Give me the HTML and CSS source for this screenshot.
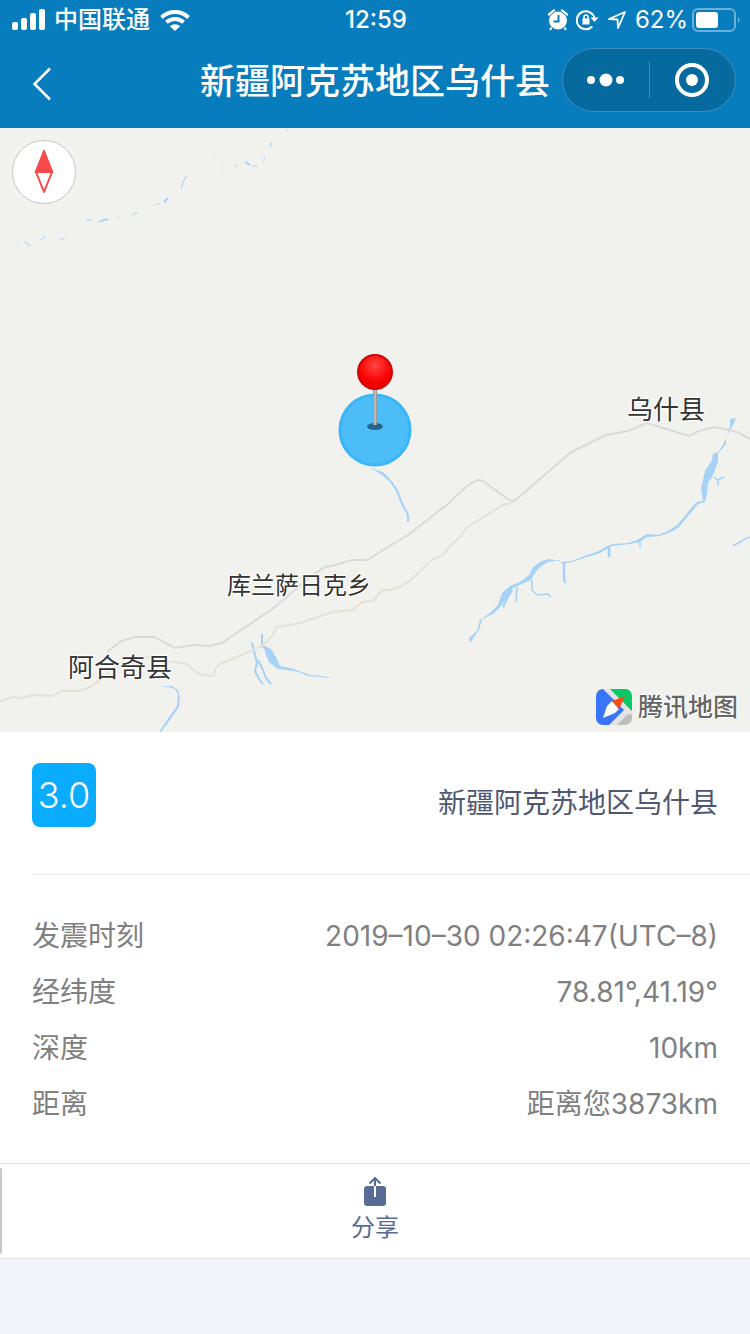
FILE: index.html
```html
<!DOCTYPE html>
<html lang="zh-CN">
<head>
    <meta charset="UTF-8">
    <meta name="viewport" content="width=device-width, initial-scale=1.0">
    <title>新疆阿克苏地区乌什县</title>
    <link rel="stylesheet" href="styles.css">
</head>
<body>
    <header class="header">
        <div class="status">
            <div class="status-left">
                <svg class="signal" width="34" height="22" viewBox="0 0 34 22" fill="#fff">
                    <rect x="0" y="13" width="6" height="8" rx="2"/>
                    <rect x="9" y="9" width="6" height="12" rx="2"/>
                    <rect x="18" y="4" width="6" height="17" rx="2"/>
                    <rect x="27" y="0" width="6" height="21" rx="2"/>
                </svg>
                <span>中国联通</span>
                <svg class="wifi" width="30" height="22" viewBox="0 0 30 22">
                    <path d="M1.5 8.5a19.5 19.5 0 0 1 27 0M6.4 13.3a12.6 12.6 0 0 1 17.2 0" fill="none" stroke="#fff" stroke-width="4"/>
                    <path d="M9.8 17.2a7.8 7.8 0 0 1 10.4 0L15 22z" fill="#fff"/>
                </svg>
            </div>
            <span class="time">12:59</span>
            <div class="status-right">
                <svg width="20" height="22" viewBox="0 0 20 22">
                    <circle cx="10" cy="11.5" r="9" fill="#fff"/>
                    <path d="M1.5 5.5L6 1.8M18.5 5.5L14 1.8" stroke="#fff" stroke-width="3" stroke-linecap="round"/>
                    <path d="M3.5 18.5L2 21M16.5 18.5L18 21" stroke="#fff" stroke-width="2"/>
                    <path d="M10.5 6v6.5H5.5" fill="none" stroke="#087dbd" stroke-width="2"/>
                    <path d="M1 7.5L8 1.5M19 7.5L12 1.5" stroke="#087dbd" stroke-width="1"/>
                </svg>
                <svg width="23" height="22" viewBox="0 0 23 22">
                    <path d="M18.6 9.5A9 9 0 1 0 16.3 17.5" fill="none" stroke="#fff" stroke-width="2"/>
                    <path d="M14.5 8.5h8L18.5 13z" fill="#fff"/>
                    <rect x="6.5" y="9.5" width="7" height="6" fill="#fff"/>
                    <path d="M8 10V8a2 2 0 0 1 4 0v2" fill="none" stroke="#fff" stroke-width="1.5"/>
                </svg>
                <svg width="20" height="20" viewBox="0 0 20 20">
                    <path d="M2 9L18 2L11 18L10.5 9.5z" fill="none" stroke="#fff" stroke-width="1.8" stroke-linejoin="round"/>
                </svg>
                <span class="percent">62%</span>
                <svg class="battery" width="48" height="24" viewBox="0 0 48 24">
                    <rect x="1" y="1" width="42" height="22" rx="5" fill="none" stroke="#6bb1d7" stroke-width="2"/>
                    <rect x="4" y="4" width="22" height="16" rx="3" fill="#fff"/>
                    <path d="M46 8.5q3 3.5 0 7z" fill="#6bb1d7"/>
                </svg>
            </div>
        </div>
        <nav class="nav">
            <button class="back" type="button" aria-label="返回">
                <svg width="20" height="34" viewBox="0 0 20 34"><path d="M18 1.5L2.5 17L18 32.5" fill="none" stroke="#fff" stroke-width="2.5"/></svg>
            </button>
            <h1 class="title">新疆阿克苏地区乌什县</h1>
            <div class="capsule">
                <button type="button" aria-label="更多">
                    <svg width="38" height="14" viewBox="0 0 38 14" fill="#fff"><circle cx="4" cy="7" r="4"/><circle cx="19" cy="7" r="6.5"/><circle cx="33" cy="7" r="4"/></svg>
                </button>
                <button type="button" aria-label="关闭">
                    <svg width="34" height="34" viewBox="0 0 34 34"><circle cx="17" cy="17" r="15" fill="none" stroke="#fff" stroke-width="4"/><circle cx="17" cy="17" r="6" fill="#fff"/></svg>
                </button>
            </div>
        </nav>
    </header>

    <section class="map">
        <svg class="map-canvas" viewBox="0 128 750 604" preserveAspectRatio="xMidYMid slice">
            <defs>
                <radialGradient id="pinHead" cx="50%" cy="30%" r="60%">
                    <stop offset="0" stop-color="#ff4545"/>
                    <stop offset="0.7" stop-color="#fb0808"/>
                    <stop offset="1" stop-color="#f00000"/>
                </radialGradient>
            </defs>
            <!-- rivers -->
            <g fill="none" stroke="#a6d2f8" stroke-width="1">
                <path d="M18 244h1M24 242l3 1l3 4M41 240l4-4M60 239h5M82 227h1M86 220h4l2 1M98 222l5-1M117 217l2 1M132 215l3-2h3M154 205h2M157 204h3M181 189l2-6l3-7M213 158h1M223 168h1M234 167l4-3M252 166h5M263 161l2-3M270 147l2-5M286 130h3"/>
                <path d="M101 221l7-2M164 202l4-4M245 162l5 3" stroke-width="2"/>
            </g>
            <g fill="#a6d2f8">
                <path d="M369 467l7 3l7 2l8 8l7 10l5 13l6 12v7h-2v-7l-6-11l-5-13l-6-9l-8-7z"/>
                <path d="M730 419L736 418L733 425L729 432L727 436L730 426z"/>
                <path d="M726 438L726 444L723 448L718 453L718 462L714 472L712 477L708 483L707 493L705 502L698 504L693 510L689 515L683 522L679 527L673 531L660 536L647 537L640 542L630 544L612 546L600 553L587 557L572 562L562 564L559 560L555 561L548 562L540 567L535 573L531 580L522 584L513 588L507 597L500 607L493 614L482 619L479 630L470 643L469 638L477 631L480 620L490 613L498 605L502 593L510 586L520 582L529 575L533 567L540 562L548 559L555 560L561 562L572 561L587 555L599 551L607 546L613 544L628 543L637 540L647 534L658 535L668 531L677 525L685 516L692 507L697 502L703 501L701 488L703 480L705 471L712 460L713 454L718 452L723 445z"/>
            </g>
            <g fill="none" stroke="#a6d2f8" stroke-width="1.5">
                <path d="M517 587l-1 15M532 580v10l5 5l11-1l3 3M640 542v5M714 477l4 3l6-3M718 480v6M733 546l7-4l5-3l5-2"/>
                <path d="M512 590l-5 8l-4 9M564 563v15l1 5M609 546v11" stroke-width="2.5"/>
                <path d="M262 634v10l2 4M252 643l3 12l2 8l-2 8l4 8l4 5M258 660l5 10l3 8l5 6" stroke-width="2"/>
            </g>
            <path fill="#a6d2f8" d="M263 645l8 4l5 8l4 9l10 2l12 4l8 3l12 1l11 2l-13-1l-12-1l-9-4l-12-2l-9-1l-9-7l-3-7z"/>
            <path fill="#a6d2f8" d="M158 686h14l6 4l2 8l-1 9l-7 10l-11 15h-2l10-15l8-11l1-12l-3-5l-6-2z"/>
            <!-- roads -->
            <path d="M514 502l-11 3l-37 23l-6 9l-10 9l-7 9l-10 4l-8 7l-15 15l-10 6l-10 3h-8l-9 11l-10 1l-11 8l-19 2l-33 11l-23 4l-5 9l-10 10l-44 19l-3 5l-1 6l-12-1l-10-6l-5-5l-19-3l-21-4l-30 10l-17 13l-10 7l-11 4h-16l-11 5l-19-1l-11 3l-9-1l-13 4" fill="none" stroke="#e5e1d6" stroke-width="2"/>
            <path d="M750 439l-13-7l-23-5l-15 4l-10 5l-42-13l-19 8l-22 4l-35 17l-54 47l-4 2l-4-1l-26-19l-6-1l-10 6l-19 18l-40 31l-10 6l-31 19l-15 0l-17 5l-10 2l-15 10l-35 30l-53 36l-13 3l-16-1l-18 3l-21-11h-20l-14 5l-13 10" fill="none" stroke="#dadada" stroke-width="2"/>
            <!-- epicentre and pin -->
            <circle cx="375" cy="430" r="35" fill="#4dbdf7" stroke="#38b5fb" stroke-width="3"/>
            <ellipse cx="375" cy="426.500" rx="8" ry="3.500" fill="#25658a"/>
            <path d="M375 388v37" stroke="#8e8e8e" stroke-width="4"/>
            <path d="M375 388v37" stroke="#beb9b7" stroke-width="2.5"/>
            <circle cx="375" cy="372" r="17" fill="url(#pinHead)" stroke="#d10505" stroke-width="2"/>
        </svg>
        <span class="place place-wushi">乌什县</span>
        <span class="place place-kulansa">库兰萨日克乡</span>
        <span class="place place-aheqi">阿合奇县</span>
        <button class="compass" type="button" aria-label="指北针">
            <svg width="20" height="46" viewBox="0 0 20 46">
                <path d="M10 3L2 23L10 43L18 23z" fill="#fff" stroke="#f84a4a" stroke-width="2" stroke-linejoin="round"/>
                <path d="M10 1L1 23.500H19z" fill="#f84a4a" stroke="#f84a4a" stroke-linejoin="round"/>
            </svg>
        </button>
        <div class="brand">
            <svg width="36" height="36" viewBox="0 0 36 36">
                <defs><clipPath id="logoBox"><rect width="36" height="36" rx="7"/></clipPath></defs>
                <g clip-path="url(#logoBox)">
                    <rect width="36" height="36" fill="#e3e3e3"/>
                    <path d="M0 0H7L28 21L13 36H0z" fill="#3875fb"/>
                    <path d="M14 0H36V22z" fill="#06c966"/>
                    <path d="M36 25V36H21L31 26z" fill="#bebebe"/>
                </g>
                <path d="M7 29L11 17L16 12L23 20L19 24z" fill="#fff"/>
                <path d="M29 7L16 12L23 20z" fill="#fc4c13"/>
            </svg>
            <span>腾讯地图</span>
        </div>
    </section>

    <main class="info">
        <div class="summary">
            <span class="level">3.0</span>
            <span class="location">新疆阿克苏地区乌什县</span>
        </div>
        <dl class="details">
            <div class="row"><dt>发震时刻</dt><dd>2019–10–30 02:26:47(UTC–8)</dd></div>
            <div class="row"><dt>经纬度</dt><dd>78.81°,41.19°</dd></div>
            <div class="row"><dt>深度</dt><dd>10km</dd></div>
            <div class="row"><dt>距离</dt><dd>距离您3873km</dd></div>
        </dl>
        <button class="share" type="button">
            <svg width="24" height="30" viewBox="0 0 24 30">
                <rect x="1" y="9" width="22" height="20" rx="3" fill="#576b95"/>
                <path d="M12 9v11" stroke="#fff" stroke-width="2"/>
                <path d="M12 9V1M6.5 6.5L12 1L17.5 6.5" fill="none" stroke="#576b95" stroke-width="2"/>
            </svg>
            <span>分享</span>
        </button>
    </main>
</body>
</html>
```

FILE: styles.css
```css
* {
    box-sizing: border-box;
}
body {
    margin: 0;
    background-color: #f3f4f9;
    font-family: Inter, "Noto Sans CJK SC", sans-serif;
    color: #808080;
}
button {
    display: flex;
    align-items: center;
    justify-content: center;
    margin: 0;
    padding: 0;
    border: 0;
    background: none;
    font-family: inherit;
    color: inherit;
}
svg {
    display: block;
    flex: none;
}

/* header */
.header {
    background-color: #087dbd;
    color: #fff;
}
.status {
    display: grid;
    grid-template-columns: 1fr auto 1fr;
    align-items: center;
    height: 40px;
    padding: 0 10px 0 12px;
    font-size: 24px;
    line-height: 32px;
}
.status-left, .status-right {
    display: flex;
    align-items: center;
    gap: 8px;
}
.status-left {
    font-weight: 500;
}
.status-right {
    justify-content: flex-end;
}
.wifi {
    margin-left: 2px;
}
.time {
    font-weight: 500;
}
.battery {
    margin-left: -4px;
}
.nav {
    display: grid;
    grid-template-columns: 1fr auto 1fr;
    align-items: center;
    height: 88px;
}
.back {
    justify-self: start;
    height: 88px;
    padding: 0 32px;
}
.title {
    margin: 0 0 6px;
    font-size: 35px;
    line-height: 48px;
    font-weight: 500;
}
.capsule {
    display: flex;
    justify-self: end;
    align-items: center;
    width: 174px;
    height: 64px;
    margin: 0 14px 8px 0;
    border: 1px solid #3c8dbb;
    border-radius: 32px;
    background-color: #066a9f;
}
.capsule button {
    flex: 1;
    height: 36px;
}
.capsule button + button {
    border-left: 1px solid #3c8dbb;
}

/* map */
.map {
    position: relative;
    height: 604px;
    overflow: hidden;
    background-color: #f1f2ee;
}
.map-canvas {
    width: 100%;
    height: 100%;
}
.place {
    position: absolute;
    font-size: 26px;
    line-height: 32px;
    color: #333;
    white-space: nowrap;
    text-shadow: 0 0 2px #fff, 1px 1px 1px #fff, -1px -1px 1px #fff, 1px -1px 1px #fff, -1px 1px 1px #fff;
}
.place-wushi {
    left: 627px;
    top: 266px;
}
.place-kulansa {
    left: 227px;
    top: 442px;
    font-size: 24px;
}
.place-aheqi {
    left: 68px;
    top: 524px;
}
.compass {
    position: absolute;
    left: 12px;
    top: 12px;
    width: 64px;
    height: 64px;
    border: 1px solid #c8c8c8;
    border-radius: 50%;
    background-color: #fff;
}
.brand {
    position: absolute;
    right: 12px;
    bottom: 7px;
    display: flex;
    align-items: center;
    gap: 6px;
    font-size: 25px;
    line-height: 36px;
    font-weight: 500;
    color: #666;
    text-shadow: 0 0 2px #fff, 1px 1px 1px #fff, -1px -1px 1px #fff;
}

/* earthquake info */
.info {
    background-color: #fff;
    font-size: 28px;
    line-height: 56px;
}
.summary {
    display: flex;
    align-items: center;
    justify-content: space-between;
    height: 143px;
    margin-left: 32px;
    padding-right: 32px;
    border-bottom: 1px solid #e5e5e5;
}
.level {
    width: 64px;
    height: 64px;
    margin-bottom: 16px;
    border-radius: 8px;
    background-color: #0aacff;
    font-size: 36px;
    line-height: 64px;
    font-weight: 300;
    text-align: center;
    color: #fff;
}
.location {
    color: #4f5872;
}
.details {
    margin: 0;
    padding: 33px 32px 31px;
}
.row {
    display: flex;
    justify-content: space-between;
}
.row dd {
    margin: 0;
}
.share {
    position: relative;
    flex-direction: column;
    gap: 3px;
    width: 100%;
    height: 96px;
    border-top: 1px solid #e2e2e2;
    border-bottom: 1px solid #e2e2e2;
    font-size: 24px;
    line-height: 36px;
    color: #576b95;
}
/* thin shade along the left edge of the bar */
.share::before {
    content: "";
    position: absolute;
    left: 0;
    top: 4px;
    bottom: 4px;
    width: 2px;
    border-radius: 1px;
    background-color: #c8c8c8;
}
```
